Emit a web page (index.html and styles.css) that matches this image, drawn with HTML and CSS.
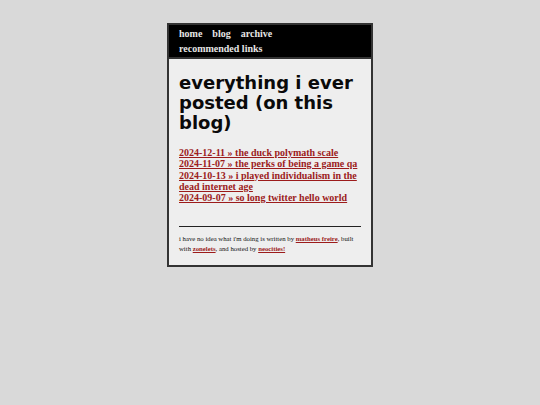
FILE: index.html
```html
<!DOCTYPE html>
<html>
<head>
<meta charset="utf-8">
<title>archive</title>
<link rel="stylesheet" href="styles.css">
</head>
<body>
<div class="page">
  <nav class="top">
    <a href="#">home</a>
    <a href="#">blog</a>
    <a href="#">archive</a>
    <a href="#">recommended links</a>
  </nav>
  <main class="content">
    <h1 class="title">everything i ever posted (on this blog)</h1>
    <ul class="posts">
      <li><a href="#">2024-12-11 » the duck polymath scale</a></li>
      <li><a href="#">2024-11-07 » the perks of being a game qa</a></li>
      <li><a href="#">2024-10-13 » i played individualism in the dead internet age</a></li>
      <li><a href="#">2024-09-07 » so long twitter hello world</a></li>
    </ul>
    <hr class="rule">
    <p class="foot">i have no idea what i'm doing is written by <a href="#">matheus freire</a>, built with <a href="#">zonelets</a>, and hosted by <a href="#">neocities!</a></p>
  </main>
</div>
</body>
</html>
```
FILE: styles.css
```css
html, body {
  margin: 0;
  padding: 0;
  background: #d9d9d9;
}
body {
  font-family: "Liberation Serif", "Times New Roman", serif;
  padding-top: 23px;
}
.page {
  width: 206px;
  box-sizing: border-box;
  margin: 0 auto;
  border: 2px solid #333;
  background: #eeeeee;
}
.top {
  background: #000;
  border-bottom: 2px solid #333;
  padding: 1px 10px 1px;
  display: flex;
  flex-wrap: wrap;
  column-gap: 10px;
  font-size: 10px;
  font-weight: bold;
  line-height: 15px;
}
.top a {
  color: #e6e6e6;
  text-decoration: none;
  white-space: nowrap;
}
.content {
  padding: 14px 10px 11px;
}
.title {
  margin: 0 0 14px;
  font-family: "DejaVu Sans", Verdana, sans-serif;
  font-weight: bold;
  font-size: 18px;
  line-height: 20px;
  color: #0a0a0a;
}
.posts {
  list-style: none;
  margin: 0;
  padding: 0;
  font-size: 10px;
  line-height: 11.25px;
  font-weight: bold;
}
.posts a {
  color: #9c1b1b;
  text-decoration: underline;
}
.rule {
  margin: 22.5px 0 7.5px;
  border: 0;
  border-top: 1.5px solid #222;
  height: 0;
}
.foot {
  margin: 0;
  font-size: 6.75px;
  line-height: 10px;
  color: #111;
}
.foot a {
  color: #9c1b1b;
  font-weight: bold;
  text-decoration: underline;
}
```
